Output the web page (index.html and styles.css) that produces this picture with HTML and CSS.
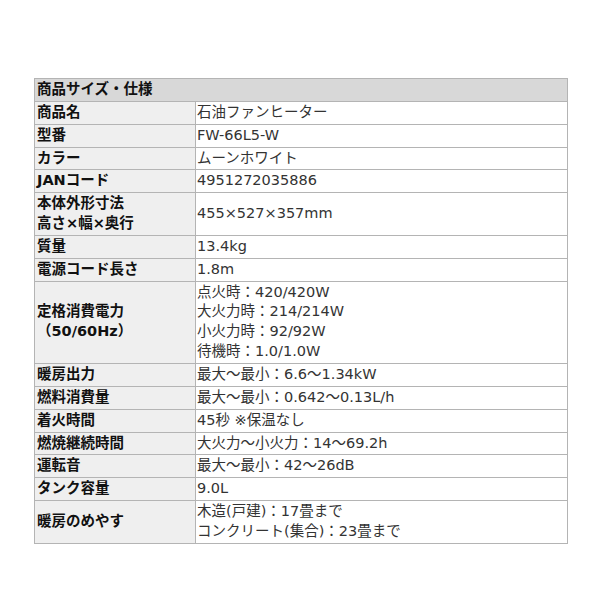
FILE: index.html
```html
<!DOCTYPE html>
<html lang="ja">
<head>
<meta charset="utf-8">
<link rel="stylesheet" href="styles.css">
</head>
<body>
<div class="page">
<table class="spec">
  <colgroup><col class="c-label"><col class="c-value"></colgroup>
  <tr><th class="head" colspan="2">商品サイズ・仕様</th></tr>
  <tr><th>商品名</th><td>石油ファンヒーター</td></tr>
  <tr><th>型番</th><td>FW-66L5-W</td></tr>
  <tr><th>カラー</th><td>ムーンホワイト</td></tr>
  <tr><th>JANコード</th><td>4951272035886</td></tr>
  <tr><th>本体外形寸法<br>高さ×幅×奥行</th><td>455×527×357mm</td></tr>
  <tr><th>質量</th><td>13.4kg</td></tr>
  <tr><th>電源コード長さ</th><td>1.8m</td></tr>
  <tr><th>定格消費電力<br>（50/60Hz）</th><td>点火時：420/420W<br>大火力時：214/214W<br>小火力時：92/92W<br>待機時：1.0/1.0W</td></tr>
  <tr><th>暖房出力</th><td>最大～最小：6.6～1.34kW</td></tr>
  <tr><th>燃料消費量</th><td>最大～最小：0.642～0.13L/h</td></tr>
  <tr><th>着火時間</th><td>45秒 ※保温なし</td></tr>
  <tr><th>燃焼継続時間</th><td>大火力～小火力：14～69.2h</td></tr>
  <tr><th>運転音</th><td>最大～最小：42～26dB</td></tr>
  <tr><th>タンク容量</th><td>9.0L</td></tr>
  <tr><th>暖房のめやす</th><td>木造(戸建)：17畳まで<br>コンクリート(集合)：23畳まで</td></tr>
</table>
</div>
</body>
</html>
```
FILE: styles.css
```css
html, body {
  margin: 0;
  padding: 0;
  background: #ffffff;
}
.page {
  padding: 78px 0 0 34px;
}
.spec {
  border-collapse: collapse;
  width: 533px;
  table-layout: fixed;
  font-family: "DejaVu Sans", "Noto Sans CJK JP", sans-serif;
  font-size: 14.5px;
  line-height: 19.85px;
  color: #222;
}
.c-label { width: 161px; }
.c-value { width: 372px; }
.spec th, .spec td {
  border: 1px solid #b4b4b4;
  padding: 1px 2px 1px 2px;
  text-align: left;
  vertical-align: middle;
  white-space: nowrap;
  overflow: hidden;
}
.spec th {
  background: #efefef;
  font-weight: bold;
  color: #111;
}
.spec th.head {
  background: #d8d8d8;
}
.spec td {
  background: #ffffff;
  font-weight: normal;
  color: #333;
  padding-left: 1px;
}
```
